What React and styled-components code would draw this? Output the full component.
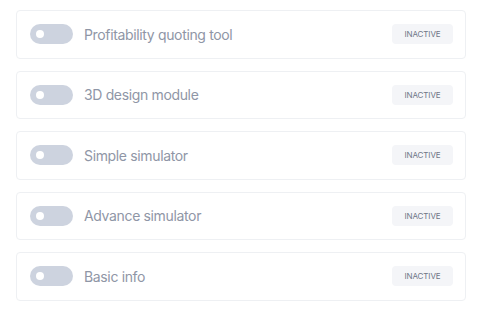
import styled, { createGlobalStyle } from "styled-components";

const GlobalStyle = createGlobalStyle`
  body {
    margin: 0;
    background: #ffffff;
    font-family: Inter, "Noto Sans", sans-serif;
  }
`;

const List = styled.div`
  display: flex;
  flex-direction: column;
  gap: 12px;
  width: 450px;
  padding: 10px 16px;
`;

const Card = styled.div`
  display: flex;
  align-items: center;
  height: 48.5px;
  box-sizing: border-box;
  padding: 0 12px 0 13px;
  border: 1px solid #eef0f3;
  border-radius: 4px;
  background: #fff;
`;

const Toggle = styled.div`
  position: relative;
  width: 43px;
  height: 20px;
  border-radius: 10px;
  background: ${({ on }) => (on ? "#4f6ef7" : "#cdd3df")};
  flex-shrink: 0;

  &::after {
    content: "";
    position: absolute;
    top: 6px;
    left: ${({ on }) => (on ? "29px" : "6px")};
    width: 8px;
    height: 8px;
    border-radius: 50%;
    background: #fff;
  }
`;

const Label = styled.span`
  flex: 1;
  margin-left: 11px;
  font-size: 14px;
  letter-spacing: -0.35px;
  color: #8f96a6;
`;

const Badge = styled.span`
  display: flex;
  align-items: center;
  justify-content: center;
  width: 61px;
  height: 20px;
  border-radius: 4px;
  background: #f4f5f8;
  color: #6f7586;
  font-size: 8px;
  letter-spacing: -0.1px;
`;

const modules = [
  "Profitability quoting tool",
  "3D design module",
  "Simple simulator",
  "Advance simulator",
  "Basic info",
];

const App = () => (
  <>
    <GlobalStyle />
    <List>
      {modules.map((name) => (
        <Card key={name}>
          <Toggle />
          <Label>{name}</Label>
          <Badge>INACTIVE</Badge>
        </Card>
      ))}
    </List>
  </>
);

export default App;
